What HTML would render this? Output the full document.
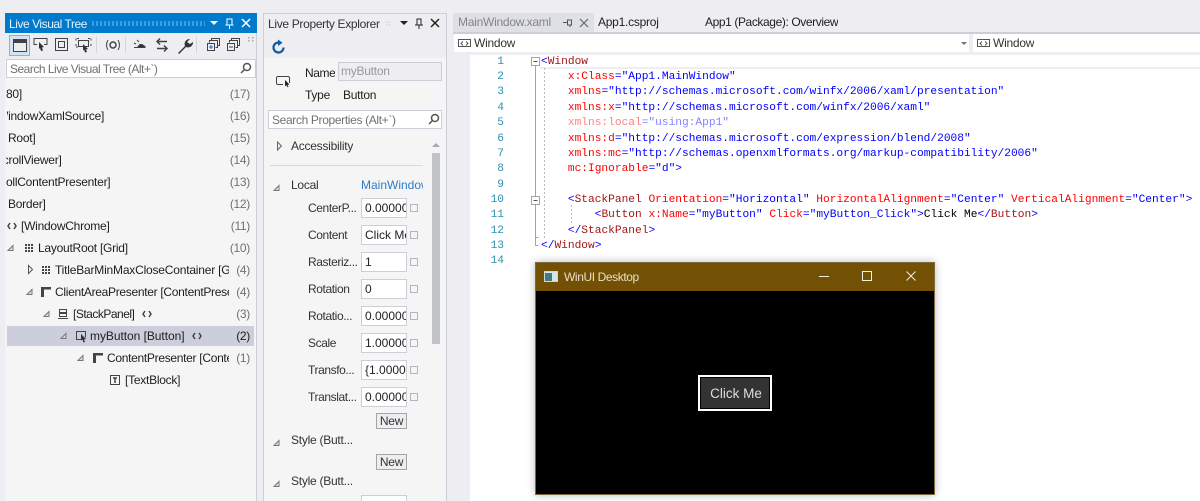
<!DOCTYPE html>
<html><head><meta charset="utf-8">
<style>
html,body{margin:0;padding:0;width:1200px;height:501px;overflow:hidden;background:#eeeef2}
#w{position:absolute;left:0;top:0;width:1200px;height:501px;overflow:hidden;background:#eeeef2;filter:blur(.3px);font-family:"Liberation Sans",sans-serif;font-size:12px;color:#1e1e1e;letter-spacing:-.25px}
.b{position:absolute;box-sizing:border-box}
.t{position:absolute;white-space:nowrap;line-height:16px;height:16px;overflow:hidden}
.c{position:absolute;left:220px;width:30px;text-align:right;line-height:16px;color:#717171;white-space:nowrap;letter-spacing:-.3px}
.l{position:absolute;left:308px;line-height:16px;color:#333;white-space:nowrap;letter-spacing:-.4px}
.i{position:absolute;left:361px;width:46px;height:20px;box-sizing:border-box;background:#fff;border:1px solid #ccced8;line-height:18px;padding-left:3px;overflow:hidden;white-space:nowrap;color:#222;letter-spacing:0}
.k{position:absolute;left:410px;width:8px;height:8px;box-sizing:border-box;border:1px solid #b5b5bb;background:#f5f5f5}
.n{position:absolute;left:376px;width:31px;height:16px;box-sizing:border-box;background:#eeeef2;border:1px solid #a5a5a5;line-height:14px;text-align:center;color:#333}
.x{position:absolute;left:541px;font-family:"Liberation Mono",monospace;font-size:11.2px;line-height:16px;white-space:pre;color:#00f;letter-spacing:0}
.m{position:absolute;left:470px;width:34px;text-align:right;font-family:"Liberation Mono",monospace;font-size:11.2px;line-height:16px;color:#2b91af;letter-spacing:0}
u{text-decoration:none;color:#a31515}
s{text-decoration:none;color:#f00}
em{font-style:normal;color:#000}
.f{opacity:.5}
svg{position:absolute;left:0;top:0}
</style></head>
<body>
<div id="w">
<!-- left panel -->
<div class="b" style="left:5px;top:13px;width:252px;height:488px;background:#f5f5f5;border-right:1px solid #ccced8"></div>
<div class="b" style="left:5px;top:13px;width:252px;height:20px;background:#007acc"></div>
<div class="b" style="left:92px;top:21px;width:113px;height:5px;background-image:radial-gradient(circle at 1px 1px,#59a8de 1px,transparent 1px);background-size:4px 2px"></div>
<div class="t" style="left:9px;top:16px;color:#e8f3fb;letter-spacing:-.45px">Live Visual Tree</div>
<div class="b" style="left:5px;top:33px;width:251px;height:26px;background:#eeeef2"></div>
<div class="b" style="left:9px;top:35px;width:21px;height:21px;background:#d3e3f5;border:1px solid #7fb5e2"></div>
<div class="b" style="left:6px;top:59px;width:250px;height:19px;background:#fff;border:1px solid #ccced8"></div>
<div class="t" style="left:10px;top:61px;color:#717171;letter-spacing:-.5px">Search Live Visual Tree (Alt+`)</div>

<div class="t" style="left:6px;top:86px">80]</div>
<div class="t" style="left:7px;top:108px;width:110px"><span style="margin-left:-10px">WindowXamlSource]</span></div>
<div class="t" style="left:8px;top:130px">Root]</div>
<div class="t" style="left:6px;top:152px;width:90px"><span style="margin-left:-11px">ScrollViewer]</span></div>
<div class="t" style="left:6px;top:174px">ollContentPresenter]</div>
<div class="t" style="left:8px;top:196px">Border]</div>
<div class="t" style="left:21px;top:218px">[WindowChrome]</div>
<div class="t" style="left:38px;top:240px">LayoutRoot [Grid]</div>
<div class="t" style="left:55px;top:262px;width:174px;letter-spacing:-.2px">TitleBarMinMaxCloseContainer [Grid]</div>
<div class="t" style="left:55px;top:284px;width:174px;letter-spacing:-.3px">ClientAreaPresenter [ContentPresenter]</div>
<div class="t" style="left:73px;top:306px;letter-spacing:-.5px">[StackPanel]</div>
<div class="b" style="left:7px;top:326px;width:247px;height:20px;background:#cccedb"></div>
<div class="t" style="left:90px;top:328px;letter-spacing:-.05px">myButton [Button]</div>
<div class="t" style="left:107px;top:350px;width:122px;letter-spacing:-.3px">ContentPresenter [ContentPresenter]</div>
<div class="t" style="left:125px;top:372px">[TextBlock]</div>

<div class="c" style="top:86px">(17)</div>
<div class="c" style="top:108px">(16)</div>
<div class="c" style="top:218px">(11)</div>
<div class="c" style="top:130px">(15)</div>
<div class="c" style="top:152px">(14)</div>
<div class="c" style="top:174px">(13)</div>
<div class="c" style="top:196px">(12)</div>
<div class="c" style="top:240px">(10)</div>
<div class="c" style="top:262px">(4)</div>
<div class="c" style="top:284px">(4)</div>
<div class="c" style="top:306px">(3)</div>
<div class="c" style="top:328px;color:#1e1e1e">(2)</div>
<div class="c" style="top:350px">(1)</div>

<!-- property panel -->
<div class="b" style="left:263px;top:13px;width:184px;height:488px;background:#f5f5f5;border:1px solid #ccced8;border-bottom:0"></div>
<div class="b" style="left:264px;top:14px;width:182px;height:44px;background:#eeeef2"></div>
<div class="t" style="left:268px;top:16px;color:#333;letter-spacing:-.32px">Live Property Explorer</div>
<div class="t" style="left:305px;top:65px;letter-spacing:-.4px">Name</div>
<div class="b" style="left:338px;top:62px;width:104px;height:19px;background:#eeeef2;border:1px solid #ccced8;line-height:17px;padding-left:2px;color:#999">myButton</div>
<div class="t" style="left:305px;top:87px">Type</div>
<div class="t" style="left:343px;top:87px">Button</div>
<div class="b" style="left:268px;top:110px;width:174px;height:19px;background:#fff;border:1px solid #ccced8"></div>
<div class="t" style="left:272px;top:112px;color:#717171;letter-spacing:-.35px">Search Properties (Alt+`)</div>
<div class="t" style="left:291px;top:138px;color:#333">Accessibility</div>
<div class="b" style="left:270px;top:165px;width:153px;height:1px;background:#d8d8de"></div>
<div class="b" style="left:432px;top:153px;width:8px;height:191px;background:#c2c3c9"></div>
<div class="t" style="left:291px;top:177px;color:#333">Local</div>
<div class="t" style="left:361px;top:177px;width:62px;color:#2f7bc6;letter-spacing:0">MainWindow.xaml</div>

<div class="l" style="top:200px">CenterP...</div><div class="i" style="top:198px">0.000000</div><div class="k" style="top:204px"></div>
<div class="l" style="top:227px">Content</div><div class="i" style="top:225px">Click Me</div><div class="k" style="top:231px"></div>
<div class="l" style="top:254px">Rasteriz...</div><div class="i" style="top:252px">1</div><div class="k" style="top:258px"></div>
<div class="l" style="top:281px">Rotation</div><div class="i" style="top:279px">0</div><div class="k" style="top:285px"></div>
<div class="l" style="top:308px">Rotatio...</div><div class="i" style="top:306px">0.000000</div><div class="k" style="top:312px"></div>
<div class="l" style="top:335px">Scale</div><div class="i" style="top:333px">1.000000</div><div class="k" style="top:339px"></div>
<div class="l" style="top:362px">Transfo...</div><div class="i" style="top:360px">{1.00000</div><div class="k" style="top:366px"></div>
<div class="l" style="top:389px">Translat...</div><div class="i" style="top:387px">0.000000</div><div class="k" style="top:393px"></div>
<div class="n" style="top:413px">New</div>
<div class="t" style="left:291px;top:432px;color:#333">Style (Butt...</div>
<div class="n" style="top:454px">New</div>
<div class="t" style="left:291px;top:473px;color:#333">Style (Butt...</div>
<div class="i" style="top:495px;left:361px"></div>

<!-- editor -->
<div class="b" style="left:453px;top:13px;width:141px;height:19px;background:#dfdfe6"></div>
<div class="t" style="left:458px;top:14px;color:#858585">MainWindow.xaml</div>
<div class="t" style="left:598px;top:14px">App1.csproj</div>
<div class="t" style="left:705px;top:14px;letter-spacing:-.4px">App1 (Package): Overview</div>
<div class="b" style="left:453px;top:32px;width:747px;height:2px;background:#ccced8"></div>
<div class="b" style="left:454px;top:34px;width:515px;height:18px;background:#fff"></div>
<div class="b" style="left:973px;top:34px;width:227px;height:18px;background:#fff"></div>
<div class="t" style="left:474px;top:35px;color:#333">Window</div>
<div class="t" style="left:993px;top:35px;color:#333">Window</div>
<div class="b" style="left:470px;top:55px;width:730px;height:446px;background:#fff"></div>
<div class="b" style="left:540px;top:67px;width:660px;height:2px;background:#eeeef2"></div>

<div class="m" style="top:54px">1</div>
<div class="m" style="top:69px">2</div>
<div class="m" style="top:84px">3</div>
<div class="m" style="top:100px">4</div>
<div class="m" style="top:115px">5</div>
<div class="m" style="top:131px">6</div>
<div class="m" style="top:146px">7</div>
<div class="m" style="top:161px">8</div>
<div class="m" style="top:177px">9</div>
<div class="m" style="top:192px">10</div>
<div class="m" style="top:207px">11</div>
<div class="m" style="top:223px">12</div>
<div class="m" style="top:238px">13</div>
<div class="m" style="top:253px">14</div>

<div class="x" style="top:54px">&lt;<u>Window</u></div>
<div class="x" style="top:69px">    <s>x:Class</s>="App1.MainWindow"</div>
<div class="x" style="top:84px">    <s>xmlns</s>="http://schemas.microsoft.com/winfx/2006/xaml/presentation"</div>
<div class="x" style="top:100px">    <s>xmlns:x</s>="http://schemas.microsoft.com/winfx/2006/xaml"</div>
<div class="x f" style="top:115px">    <s>xmlns:local</s>="using:App1"</div>
<div class="x" style="top:131px">    <s>xmlns:d</s>="http://schemas.microsoft.com/expression/blend/2008"</div>
<div class="x" style="top:146px">    <s>xmlns:mc</s>="http://schemas.openxmlformats.org/markup-compatibility/2006"</div>
<div class="x" style="top:161px">    <s>mc:Ignorable</s>="d"&gt;</div>
<div class="x" style="top:192px">    &lt;<u>StackPanel</u> <s>Orientation</s>="Horizontal" <s>HorizontalAlignment</s>="Center" <s>VerticalAlignment</s>="Center"&gt;</div>
<div class="x" style="top:207px">        &lt;<u>Button</u> <s>x:Name</s>="myButton" <s>Click</s>="myButton_Click"&gt;<em>Click Me</em>&lt;/<u>Button</u>&gt;</div>
<div class="x" style="top:223px">    &lt;/<u>StackPanel</u>&gt;</div>
<div class="x" style="top:238px">&lt;/<u>Window</u>&gt;</div>

<!-- floating window -->
<div class="b" style="left:535px;top:262px;width:400px;height:233px;background:#000;border:1px solid #7c6a3a;box-shadow:0 0 8px rgba(0,0,0,.28)"></div>
<div class="b" style="left:536px;top:263px;width:398px;height:28px;background:#725004"></div>
<div class="t" style="left:564px;top:269px;color:#eadfc6;letter-spacing:-.4px">WinUI Desktop</div>
<div class="b" style="left:698px;top:375px;width:74px;height:36px;background:#333;border:2px solid #fff;box-shadow:inset 0 0 0 1px #000"></div>
<div class="t" style="left:699px;top:385px;width:74px;text-align:center;color:#ddd;font-size:13.5px;height:18px;line-height:18px;letter-spacing:0">Click Me</div>

<svg width="1200" height="501" viewBox="0 0 1200 501" fill="none">
<!-- title bar glyphs, tree panel -->
<path d="M210 21h8l-4 4z" fill="#fff"/>
<path d="M227 19h5v6h-5zM229.500 25v4M225.500 25h8" stroke="#fff"/>
<path d="M242 19l8 8M250 19l-8 8" stroke="#fff" stroke-width="1.500"/>
<!-- toolbar -->
<g stroke="#424242">
<rect x="13.500" y="39.500" width="13" height="12" fill="#eee"/><path d="M13 41.500h14" stroke-width="3"/>
<path d="M37 44.500h-3v-6h13v6h-3"/><path d="M39 42l5 5-2 .5 1 3-2 .5-1-3-1 1z" fill="#333" stroke="none"/>
<rect x="55.500" y="38.500" width="12" height="12"/><rect x="58.500" y="41.500" width="6" height="6"/>
<path d="M79 38.500h-3v3M88 38.500h3v3M76 44v3h3M91 44v2" stroke-dasharray="2 1"/><rect x="78.500" y="40.500" width="10" height="6"/><path d="M83 44l5 5-2 .5 1 2.500-2 .5-1-3-1 1z" fill="#333" stroke="none"/>
<path d="M108 40q-3 5 0 10M118 40q3 5 0 10" /><circle cx="113" cy="45" r="3" stroke-width="1.500"/>
<path d="M138 47.500h7v-1l-3-2h-2l-2 2zM134 47.500h10" fill="#333"/><path d="M137 40l2 2M134 43l2 1" stroke-width="1"/>
<path d="M157 41.500h10M160 38.500l-3 3 3 3M167 48.500h-10M164 45.500l3 3-3 3" stroke-width="1.500"/>
<path d="M178 53l7-7a5 5 0 0 1 5-7l-3 3 3 2 3-2a5 5 0 0 1-7 5l-7 7z" fill="#333" stroke="none"/>
<path d="M209.500 42.500v-2h8v7h-2M211.500 40.500v-2h8v7h-2"/><rect x="207.500" y="43.500" width="7" height="7" fill="#eeeef2"/><path d="M209 47h4M211 45v4" stroke="#1b6fb5"/>
<path d="M229.500 42.500v-2h8v7h-2M231.500 40.500v-2h8v7h-2"/><rect x="227.500" y="43.500" width="7" height="7" fill="#eeeef2"/><path d="M229 47h4"/>
</g>
<path d="M96.500 37v16M125.500 37v16M196.500 37v16" stroke="#d5d5da"/>
<g fill="#aaa"><rect x="248" y="37" width="1.500" height="1.500"/><rect x="252" y="37" width="1.500" height="1.500"/><rect x="248" y="40" width="1.500" height="1.500"/><rect x="252" y="40" width="1.500" height="1.500"/></g>
<!-- search icons -->
<g stroke="#555" stroke-width="1.500"><circle cx="247" cy="67" r="3.500"/><path d="M244.500 69.500l-3.500 3.500"/><circle cx="435" cy="118" r="3.500"/><path d="M432.500 120.500l-3.500 3.500"/></g>
<!-- tree icons -->
<g stroke="#444" fill="none">
<path d="M10 223l-2 3 2 3M14 223l2 3-2 3" stroke-width="1.500"/>
<path d="M145 311l-2 3 2 3M149 311l2 3-2 3" stroke-width="1.500"/>
<path d="M195 333l-2 3 2 3M199 333l2 3-2 3" stroke-width="1.500"/>
<path d="M8 250.500l5-5v5zM27 294.500l5-5v5zM44 316.500l5-5v5zM61 338.500l5-5v5zM78 360.500l5-5v5z" stroke="#777" fill="#ddd"/>
<path d="M28.500 265.500v8l4-4z" stroke="#555"/>
<path d="M41 287h10v2.500h-7v7.500h-3z" fill="#444" stroke="none"/><path d="M93 353h10v2.500h-7v7.500h-3z" fill="#444" stroke="none"/>
<rect x="59.500" y="309.500" width="7" height="3"/><rect x="59.500" y="313.500" width="7" height="3"/><path d="M58 318.500h10"/>
<path d="M82 339.500h-5.500v-8h9v6"/><path d="M81 334l5 5-2 .5 1 2.500-1.500.5-1-3-1.500 1z" fill="#333" stroke="none"/>
<rect x="110.500" y="375.500" width="9" height="9"/><path d="M113 378h4M115 378v5" stroke-width="1.500"/>
</g>
<g fill="#444">
<path d="M25 244h2v2h-2zM28 244h2v2h-2zM31 244h2v2h-2zM25 247h2v2h-2zM28 247h2v2h-2zM31 247h2v2h-2zM25 250h2v2h-2zM28 250h2v2h-2zM31 250h2v2h-2z"/>
<path d="M42 266h2v2h-2zM45 266h2v2h-2zM48 266h2v2h-2zM42 269h2v2h-2zM45 269h2v2h-2zM48 269h2v2h-2zM42 272h2v2h-2zM45 272h2v2h-2zM48 272h2v2h-2z"/>
</g>
<!-- property icons -->
<path d="M277.500 142v8l4-4z" stroke="#666" fill="#eee"/>
<path d="M274 190.500l5-5v5zM274 445.500l5-5v5zM274 486.500l5-5v5z" stroke="#777" fill="#ddd"/>
<path d="M278 42.500a5 5 0 1 0 5.500 5" stroke="#0e5a9e" stroke-width="2.200"/>
<path d="M278 39.500v6.500l4.500-3.200z" fill="#0e5a9e"/>
<path d="M283 84.500h-5a1.500 1.500 0 0 1-1.500-1.500v-5a1.500 1.500 0 0 1 1.500-1.500h10a1.500 1.500 0 0 1 1.500 1.500v5" stroke="#444"/>
<path d="M285 80l4.500 4.500-2 .3 1 2-1 .5-1-2-1.500 1z" fill="#222"/>
<path d="M432 147l4-4 4 4z" fill="#aaa"/>
<!-- panel title glyphs -->
<g fill="#ccc"><circle cx="386" cy="22" r=".8"/><circle cx="389" cy="22" r=".8"/><circle cx="387" cy="25" r=".8"/><circle cx="390" cy="25" r=".8"/></g>
<path d="M400 21h8l-4 4z" fill="#222"/>
<path d="M417 19h4v6h-4zM419 25v4M415 25h8" stroke="#222"/>
<path d="M431 19l8 8M439 19l-8 8" stroke="#222" stroke-width="1.500"/>
<!-- tab glyphs -->
<path d="M563 22.500h4M567.500 20v5h4v-5zM570 25v2" stroke="#555"/>
<path d="M580 19l8 8M588 19l-8 8" stroke="#666" stroke-width="1.200"/>
<path d="M961 42h6l-3 3z" fill="#777"/>
<!-- nav icons -->
<g stroke="#555"><rect x="458.500" y="39.500" width="12" height="7"/><path d="M463 41.500l-2 2 2 2M466 41.500l2 2-2 2"/>
<rect x="977.500" y="39.500" width="12" height="7"/><path d="M982 41.500l-2 2 2 2M985 41.500l2 2-2 2"/></g>
<!-- margin lines -->
<path d="M535.500 66v179.500h3M535.500 237.500h3" stroke="#a5a5a5"/>
<path d="M544.500 68v171M571.500 205v18" stroke="#bbb" stroke-dasharray="2 2"/>
<rect x="531.500" y="57.500" width="8" height="8" stroke="#a5a5a5" fill="#fff"/><path d="M533.500 61.500h4" stroke="#555"/>
<rect x="531.500" y="196.500" width="8" height="8" stroke="#a5a5a5" fill="#fff"/><path d="M533.500 200.500h4" stroke="#555"/>
<!-- window glyphs -->
<rect x="544.500" y="271.500" width="13" height="10" stroke="#cfd6d8" fill="#d8e4e6"/><rect x="545" y="273" width="7" height="8" fill="#3e7d86"/>
<path d="M819 276.500h10" stroke="#f2eee2"/>
<rect x="862.500" y="271.500" width="9" height="9" stroke="#f2eee2"/>
<path d="M906.500 271.500l9 9M915.500 271.500l-9 9" stroke="#f2eee2"/>
</svg>
</div>
</body></html>
